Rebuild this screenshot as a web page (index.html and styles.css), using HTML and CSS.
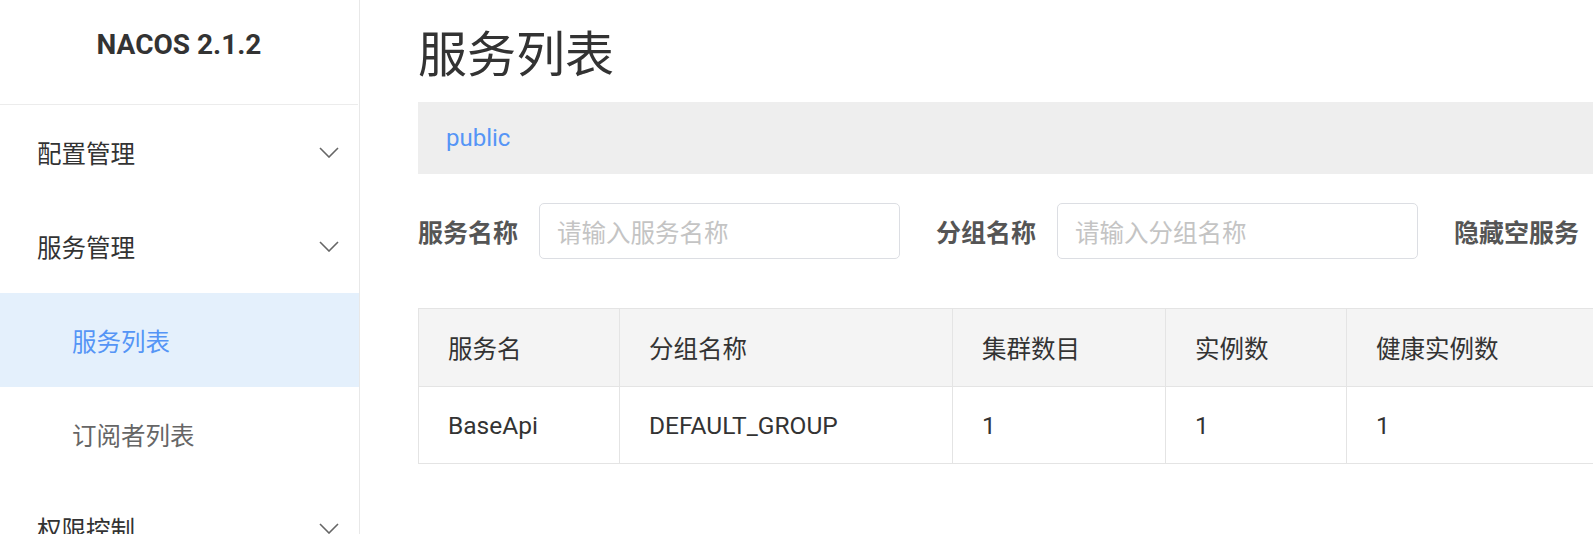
FILE: index.html
```html
<!DOCTYPE html>
<html lang="zh-CN">
<head>
<meta charset="utf-8">
<title>服务列表</title>
<link rel="stylesheet" href="styles.css">
</head>
<body>
<div class="app">
  <aside class="sidebar">
    <div class="brand">NACOS 2.1.2</div>
    <ul class="menu">
      <li class="menu-item group">
        <span>配置管理</span>
        <svg class="chev" width="20" height="11" viewBox="0 0 20 11"><path d="M1 1 L10 10 L19 1" fill="none" stroke="#666" stroke-width="1.6"/></svg>
      </li>
      <li class="menu-item group">
        <span>服务管理</span>
        <svg class="chev" width="20" height="11" viewBox="0 0 20 11"><path d="M1 1 L10 10 L19 1" fill="none" stroke="#666" stroke-width="1.6"/></svg>
      </li>
      <li class="menu-item sub active"><span>服务列表</span></li>
      <li class="menu-item sub"><span>订阅者列表</span></li>
      <li class="menu-item group">
        <span>权限控制</span>
        <svg class="chev" width="20" height="11" viewBox="0 0 20 11"><path d="M1 1 L10 10 L19 1" fill="none" stroke="#666" stroke-width="1.6"/></svg>
      </li>
    </ul>
  </aside>
  <main class="main">
    <div class="content">
      <h1 class="title">服务列表</h1>
      <div class="ns-bar"><span class="ns">public</span></div>
      <div class="filters">
        <label class="flabel">服务名称</label>
        <div class="input"><span class="ph">请输入服务名称</span></div>
        <label class="flabel">分组名称</label>
        <div class="input"><span class="ph">请输入分组名称</span></div>
        <label class="flabel">隐藏空服务</label>
      </div>
      <table class="table">
        <colgroup>
          <col style="width:201px">
          <col style="width:333px">
          <col style="width:213px">
          <col style="width:181px">
          <col style="width:247px">
        </colgroup>
        <thead>
          <tr><th>服务名</th><th>分组名称</th><th>集群数目</th><th>实例数</th><th>健康实例数</th></tr>
        </thead>
        <tbody>
          <tr><td>BaseApi</td><td>DEFAULT_GROUP</td><td>1</td><td>1</td><td>1</td></tr>
        </tbody>
      </table>
    </div>
  </main>
</div>
</body>
</html>
```

FILE: styles.css
```css
* { box-sizing: border-box; }
html, body {
  margin: 0;
  padding: 0;
  height: 100%;
  overflow: hidden;
  background: #fff;
}
body {
  font-family: Roboto, "Noto Sans CJK SC", sans-serif;
  color: #333;
}
.app {
  display: flex;
  height: 534px;
}
.sidebar {
  flex: 0 0 360px;
  border-right: 1px solid #e8e8e8;
  display: flex;
  flex-direction: column;
  overflow: hidden;
}
.brand {
  flex: none;
  height: 105px;
  border-bottom: 1px solid #ececec;
  text-align: center;
  font-family: Roboto, sans-serif;
  font-weight: 700;
  font-size: 28px;
  line-height: 28px;
  padding-top: 31px;
  color: #333;
  margin-right: 1px;
}
.menu {
  flex: none;
  list-style: none;
  margin: 0;
  padding: 0;
}
.menu-item {
  height: 94px;
  display: flex;
  align-items: center;
  justify-content: space-between;
  font-size: 24.5px;
  font-family: "Noto Sans CJK SC", sans-serif;
}
.menu-item.group {
  padding: 0 20px 0 37px;
  color: #333;
}
.menu-item.sub {
  padding-left: 72px;
  color: #666;
}
.menu-item.active {
  background: #e4f0fc;
  color: #5595f6;
}
.chev { display: block; }
.main {
  flex: 1 1 auto;
  min-width: 0;
  overflow: hidden;
}
.content {
  width: 1233px;
  padding-left: 58px;
}
.title {
  margin: 0;
  height: 102px;
  padding-top: 24px;
  font-size: 49px;
  line-height: 53px;
  font-weight: 400;
  color: #333;
  font-family: "Noto Sans CJK SC", sans-serif;
}
.ns-bar {
  height: 72px;
  background: #eee;
  display: flex;
  align-items: center;
  padding-left: 28px;
}
.ns {
  color: #5595f6;
  font-size: 24px;
  font-family: Roboto, sans-serif;
}
.filters {
  display: flex;
  align-items: center;
  margin-top: 29px;
  height: 56px;
}
.flabel {
  font-family: "Noto Sans CJK SC", sans-serif;
  font-weight: 700;
  font-size: 25px;
  color: #555;
  margin-right: 21px;
  white-space: nowrap;
}
.input {
  flex: none;
  width: 361px;
  height: 56px;
  border: 1px solid #dcdee3;
  border-radius: 5px;
  display: flex;
  align-items: center;
  padding-left: 17px;
  margin-right: 36px;
}
.ph {
  font-family: "Noto Sans CJK SC", sans-serif;
  font-size: 24.5px;
  color: #c4c4c4;
}
.table {
  margin-top: 49px;
  border-collapse: collapse;
  table-layout: fixed;
  width: 1175px;
}
.table th, .table td {
  border: 1px solid #e4e4e4;
  text-align: left;
  padding: 0 0 0 29px;
  font-size: 24.5px;
  font-weight: 400;
  color: #333;
  white-space: nowrap;
}
.table tr > :last-child { border-right: none; }
.table th {
  height: 78px;
  background: #f4f4f4;
  font-family: "Noto Sans CJK SC", sans-serif;
}
.table td {
  height: 77px;
  font-family: Roboto, "Noto Sans CJK SC", sans-serif;
}
```
